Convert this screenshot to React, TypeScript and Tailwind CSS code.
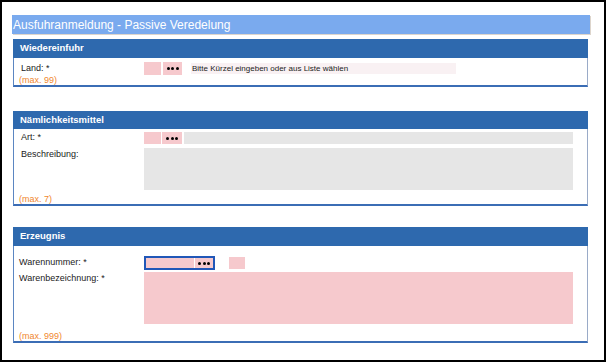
const pink = 'bg-[#f6c9cd]'

function Dots({ className = '' }: { className?: string }) {
  return (
    <div className={`flex items-center justify-center gap-[1.5px] ${className}`}>
      <span className="w-[3px] h-[3px] rounded-full bg-black" />
      <span className="w-[3px] h-[3px] rounded-full bg-black" />
      <span className="w-[3px] h-[3px] rounded-full bg-black" />
    </div>
  )
}

function Section({ title, headerH, children }: { title: string; headerH: string; children: React.ReactNode }) {
  return (
    <div className="ml-[11px] w-[575px]">
      <div className={`${headerH} bg-[#2e69ae] text-white font-bold text-[9.5px] pl-[7px] flex items-center`}>{title}</div>
      <div className="bg-white border-l border-l-[#5b86c2] border-r border-r-[#9aabc8] border-b-2 border-b-[#3b6db5] pr-[14px]">
        {children}
      </div>
    </div>
  )
}

function Max({ text, className = '' }: { text: string; className?: string }) {
  return <div className={`pl-[5px] text-[9px] leading-[10px] text-[#f0872f] ${className}`}>{text}</div>
}

export default function App() {
  return (
    <div className="w-[607px] h-[362px] bg-white font-['Liberation_Sans',Arial,sans-serif] text-[#222]">
      <div className="w-[606px] h-[362px] border-2 border-black pt-[13px]">
        <div className="ml-[10px] w-[578px] h-[19px] bg-[#7aaaee] shadow-[1px_1px_0_#ddd5cc] text-white text-[12px] pl-[1px] flex items-center">
          Ausfuhranmeldung - Passive Veredelung
        </div>

        <div className="mt-[5px]">
          <Section title="Wiedereinfuhr" headerH="h-[19px]">
            <div className="pt-[4px]">
              <div className="flex h-[13px] items-center">
                <div className="w-[130px] pl-[7px] text-[9px]">Land: *</div>
                <div className={`w-[17px] h-[13px] ${pink}`} />
                <Dots className={`ml-[2px] w-[19px] h-[13px] ${pink}`} />
                <div className="ml-[9px] w-[265px] h-[11px] bg-[#f9f1f3] text-[8px] leading-[11px] pl-[1px]">
                  Bitte Kürzel eingeben oder aus Liste wählen
                </div>
              </div>
              <Max text="(max. 99)" />
            </div>
          </Section>
        </div>

        <div className="mt-[24px]">
          <Section title="Nämlichkeitsmittel" headerH="h-[18px]">
            <div className="pt-[3px]">
              <div className="flex h-[12px] items-center">
                <div className="w-[130px] pl-[7px] text-[9px]">Art: *</div>
                <div className={`w-[17px] h-[12px] ${pink}`} />
                <Dots className={`ml-[1px] w-[20px] h-[12px] ${pink}`} />
                <div className="ml-[2px] flex-1 h-[12px] bg-[#e6e6e6]" />
              </div>
              <div className="flex mt-[4px]">
                <div className="w-[130px] pl-[7px] text-[9px] leading-[12px]">Beschreibung:</div>
                <div className="flex-1 h-[42px] bg-[#e6e6e6]" />
              </div>
              <Max text="(max. 7)" className="pt-[4px]" />
            </div>
          </Section>
        </div>

        <div className="mt-[21px]">
          <Section title="Erzeugnis" headerH="h-[19px]">
            <div className="pt-[10px]">
              <div className="flex h-[14px] items-center">
                <div className="w-[130px] pl-[5px] text-[9px]">Warennummer: *</div>
                <div className="flex w-[71px] h-[14px] border-2 border-[#2157b8]">
                  <div className={`w-[48px] h-full ${pink}`} />
                  <div className="w-[1px] h-full bg-white" />
                  <Dots className={`flex-1 h-full ${pink}`} />
                </div>
                <div className={`ml-[14px] w-[16px] h-[12px] ${pink}`} />
              </div>
              <div className="flex mt-[2px]">
                <div className="w-[130px] pl-[5px] text-[9px] leading-[12px]">Warenbezeichnung: *</div>
                <div className={`flex-1 h-[52px] ${pink}`} />
              </div>
              <Max text="(max. 999)" className="pt-[7px]" />
            </div>
          </Section>
        </div>
      </div>
    </div>
  )
}
